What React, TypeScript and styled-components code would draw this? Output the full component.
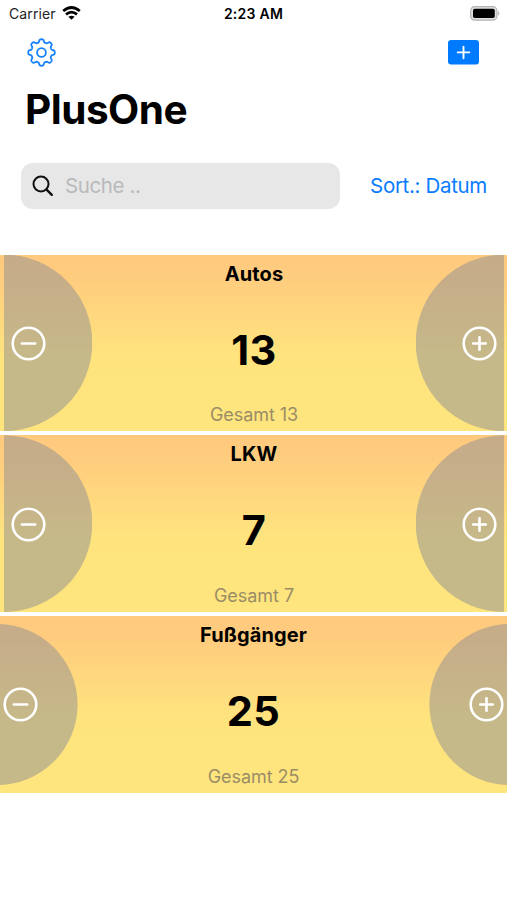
import React from 'react';
import styled, { createGlobalStyle } from 'styled-components';

const GlobalStyle = createGlobalStyle`
  *, *::before, *::after { box-sizing: border-box; }
  body { margin: 0; background: #fff; }
  button { appearance: none; border: 0; padding: 0; background: none; font: inherit; color: inherit; }
`;

const Screen = styled.main`
  width: 507px;
  height: 900px;
  overflow: hidden;
  background: #fff;
  color: #000;
  font-family: Inter, 'Liberation Sans', sans-serif;
`;

const StatusBar = styled.header`
  display: grid;
  grid-template-columns: 1fr auto 1fr;
  align-items: center;
  height: 27px;
  padding: 0 6px 0 9px;
  font-size: 14px;
  line-height: 20px;
`;

const Carrier = styled.div`
  display: flex;
  align-items: center;
  gap: 6px;
  letter-spacing: 0.1px;
  color: #222;
`;

const Clock = styled.div`
  margin-right: 3px;
  font-weight: 600;
  letter-spacing: 0.25px;
`;

const BatterySlot = styled.div`
  display: flex;
  justify-content: flex-end;
`;

const NavBar = styled.nav`
  display: flex;
  align-items: center;
  justify-content: space-between;
  height: 50px;
  padding: 0 28px 0 27px;
`;

const NavButton = styled.button`
  display: flex;
  color: #007aff;
`;

const Title = styled.h1`
  margin: 7.5px 0 0 25px;
  font-size: 40.5px;
  line-height: 50px;
  font-weight: 700;
  letter-spacing: -0.5px;
`;

const Toolbar = styled.div`
  display: flex;
  align-items: center;
  justify-content: space-between;
  margin-top: 28.1px;
  padding: 0 20px 0 21px;
`;

const SearchField = styled.label`
  display: flex;
  align-items: center;
  gap: 11px;
  width: 319px;
  height: 46px;
  padding-left: 11px;
  border-radius: 12px;
  background: #e7e7e7;
`;

const SearchInput = styled.input`
  width: 250px;
  padding: 1px 0 0;
  border: 0;
  outline: 0;
  background: transparent;
  font: 400 20.5px/26px Inter, 'Liberation Sans', sans-serif;
  letter-spacing: -0.4px;
  &::placeholder { color: #b9b9bb; opacity: 1; }
`;

const SortButton = styled.button`
  padding-top: 1px;
  color: #0a7cff;
  font-size: 20.5px;
  line-height: 26px;
  letter-spacing: -0.33px;
  white-space: nowrap;
`;

const CounterList = styled.section`
  display: flex;
  flex-direction: column;
  gap: 4.3px;
  margin-top: 46px;
`;

const CounterCard = styled.article<{ $large: boolean }>`
  display: flex;
  align-items: center;
  justify-content: space-between;
  height: 176.5px;
  padding: ${p => (p.$large ? '0 3px 0 4px' : '0')};
  background: linear-gradient(#ffc97e 0%, #ffcd7e 15%, #ffe47e 58%, #ffe57e 100%);
`;

const StepButton = styled.button<{ $side: 'left' | 'right'; $large: boolean }>`
  display: flex;
  align-items: center;
  justify-content: ${p => (p.$side === 'left' ? 'flex-start' : 'flex-end')};
  width: ${p => (p.$large ? 88.3 : 77.6)}px;
  height: 100%;
  padding: 1px ${p => (p.$large ? 7 : 3)}px 0;
  background: rgba(142, 142, 147, 0.5);
  clip-path: circle(
    ${p => (p.$large ? '88.3px' : '80.6px')} at
    ${p => (p.$side === 'left'
      ? (p.$large ? '0px' : '-3px')
      : (p.$large ? '100%' : 'calc(100% + 3px)'))} 50%
  );
`;

const CounterBody = styled.div`
  display: flex;
  flex-direction: column;
  align-items: center;
  height: 100%;
`;

const CounterName = styled.h2`
  margin: 6px 0 0;
  font-size: 20px;
  line-height: 26px;
  font-weight: 700;
  letter-spacing: 0.1px;
`;

const CounterValue = styled.strong`
  margin-top: 38px;
  font-size: 41.5px;
  line-height: 50px;
  font-weight: 700;
  letter-spacing: 0.3px;
`;

const CounterTotal = styled.span`
  margin-top: 28.5px;
  color: #9a8d66;
  font-size: 18px;
  line-height: 24px;
  letter-spacing: -0.05px;
`;

const WifiIcon = () => (
  <svg width="19" height="15" viewBox="0 0 19 15" fill="none" stroke="#000" strokeWidth="2.8">
    <path d="M1.2 5Q9.5 -2 17.8 5" />
    <path d="M4 8.4Q9.5 3.9 15 8.4" />
    <path d="M6.4 10.7Q9.5 8.6 12.6 10.7L9.5 13.8Z" fill="#000" stroke="none" />
  </svg>
);

const BatteryIcon = () => (
  <svg width="31" height="15" viewBox="0 0 31 15">
    <rect x="0.7" y="0.7" width="26.2" height="13.4" rx="3.8" fill="#e0e0e0" stroke="#b4b4b4" strokeWidth="1.2" />
    <rect x="3" y="2.8" width="21.8" height="9.3" rx="1.8" fill="#000" />
    <path d="M28.2 5.1Q30.6 7.4 28.2 9.7Z" fill="#aaa" />
  </svg>
);

const gearOutline = (() => {
  const steps = 192;
  const points = Array.from({ length: steps }, (_, i) => {
    const a = (i / steps) * Math.PI * 2;
    const wave = Math.tanh(2 * Math.cos(8 * a)) / Math.tanh(2);
    const r = 11.8 + 1.45 * wave;
    return `${(14.5 + r * Math.sin(a)).toFixed(2)} ${(14.5 - r * Math.cos(a)).toFixed(2)}`;
  });
  return `M${points.join('L')}Z`;
})();

const GearIcon = () => (
  <svg width="29" height="29" viewBox="0 0 29 29" fill="none" stroke="#1681fa" strokeWidth="1.8" strokeLinejoin="round">
    <path d={gearOutline} />
    <circle cx="14.5" cy="14.5" r="4.4" />
  </svg>
);

const AddIcon = () => (
  <svg width="31" height="25" viewBox="0 0 31 25">
    <rect width="31" height="24.5" rx="3.2" fill="#007aff" />
    <path d="M9.7 12.4H21.3M15.5 6.6V18.2" stroke="#fff" strokeWidth="1.9" strokeLinecap="round" />
  </svg>
);

const SearchIcon = () => (
  <svg width="22" height="22" viewBox="0 0 22 22" fill="none" stroke="#111" strokeLinecap="round">
    <circle cx="9" cy="9" r="7.5" strokeWidth="2" />
    <path d="M14.6 14.6L19.8 19.8" strokeWidth="2.4" />
  </svg>
);

const StepIcon = ({ plus }: { plus: boolean }) => (
  <svg width="35" height="35" viewBox="0 0 35 35" fill="none" stroke="#fff" strokeWidth="2.6" strokeLinecap="round">
    <circle cx="17.5" cy="17.5" r="15.8" />
    <path d={plus ? 'M11.2 17.5H23.8M17.5 11.2V23.8' : 'M10.9 17.5H24.1'} />
  </svg>
);

const counters = [
  { name: 'Autos', value: 13, large: true },
  { name: 'LKW', value: 7, large: true },
  { name: 'Fußgänger', value: 25, large: false },
];

export default function App() {
  return (
    <Screen>
      <GlobalStyle />
      <StatusBar>
        <Carrier>Carrier <WifiIcon /></Carrier>
        <Clock>2:23 AM</Clock>
        <BatterySlot><BatteryIcon /></BatterySlot>
      </StatusBar>
      <NavBar>
        <NavButton aria-label="Einstellungen"><GearIcon /></NavButton>
        <NavButton aria-label="Hinzufügen"><AddIcon /></NavButton>
      </NavBar>
      <Title>PlusOne</Title>
      <Toolbar>
        <SearchField>
          <SearchIcon />
          <SearchInput placeholder="Suche .." />
        </SearchField>
        <SortButton>Sort.: Datum</SortButton>
      </Toolbar>
      <CounterList>
        {counters.map(c => (
          <CounterCard key={c.name} $large={c.large}>
            <StepButton $side="left" $large={c.large} aria-label="Verringern"><StepIcon plus={false} /></StepButton>
            <CounterBody>
              <CounterName>{c.name}</CounterName>
              <CounterValue>{c.value}</CounterValue>
              <CounterTotal>Gesamt {c.value}</CounterTotal>
            </CounterBody>
            <StepButton $side="right" $large={c.large} aria-label="Erhöhen"><StepIcon plus /></StepButton>
          </CounterCard>
        ))}
      </CounterList>
    </Screen>
  );
}
